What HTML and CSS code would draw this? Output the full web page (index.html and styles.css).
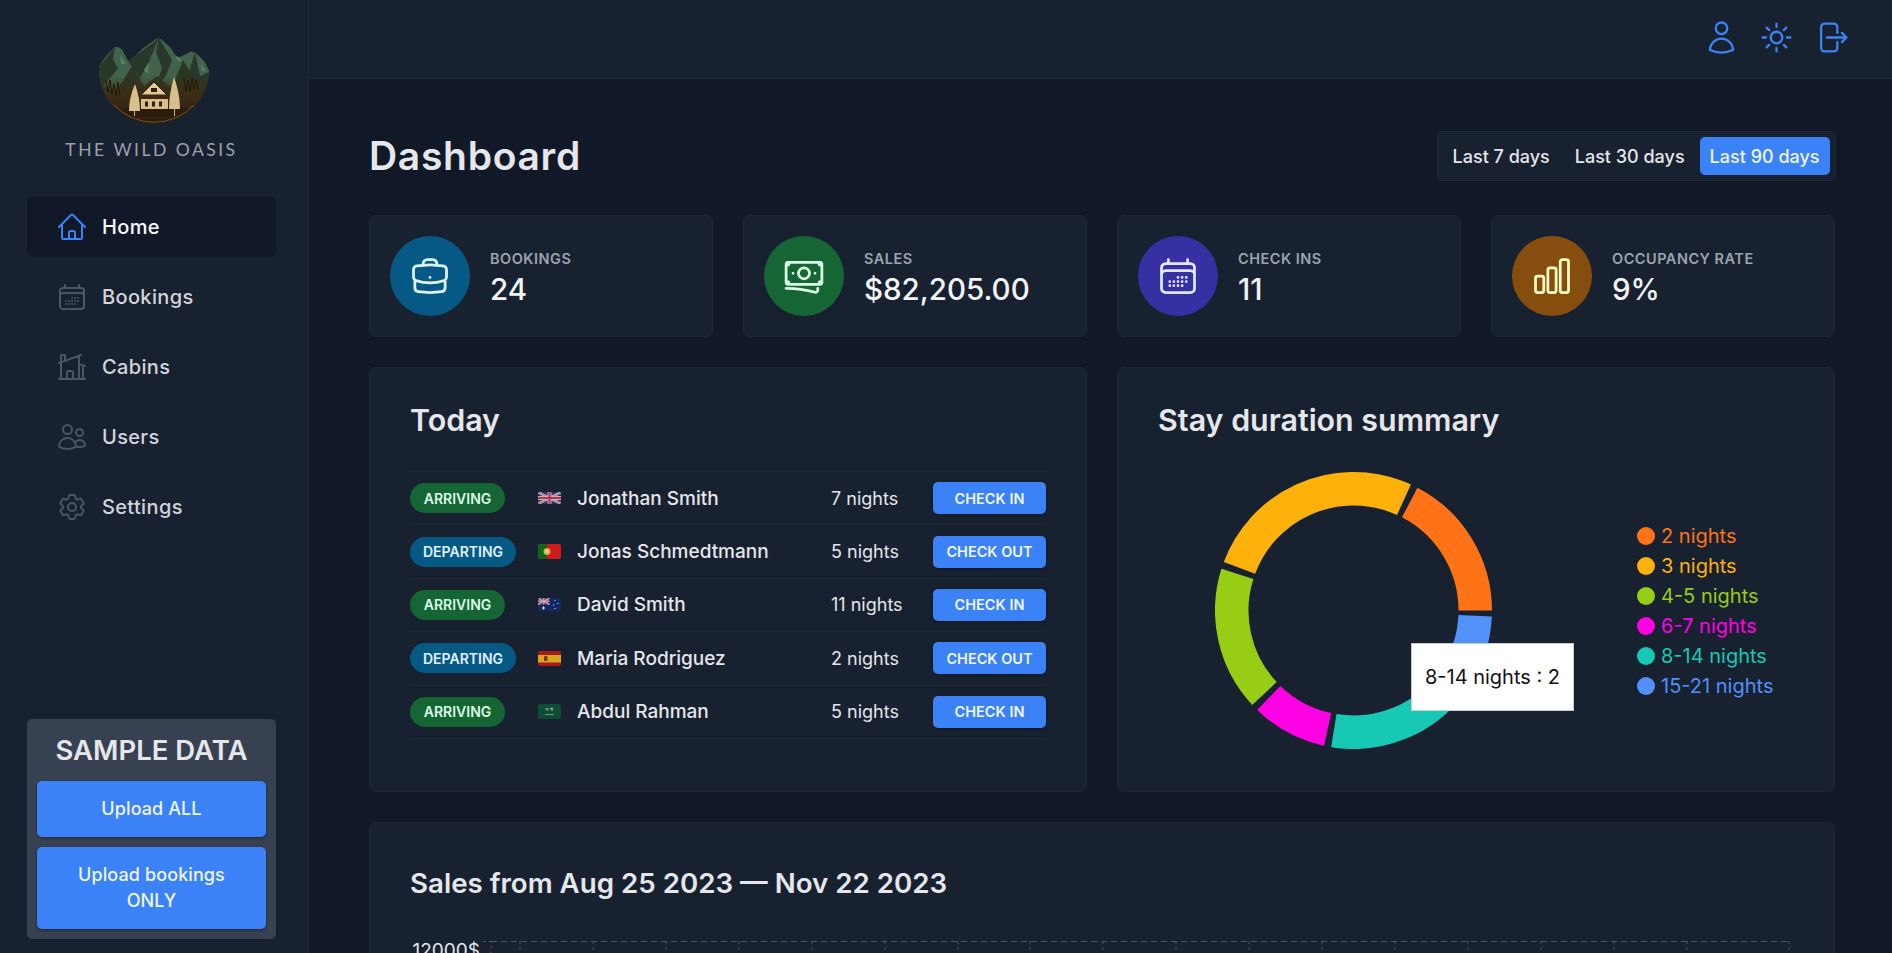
FILE: index.html
```html
<!DOCTYPE html>
<html lang="en">
<head>
  <meta charset="UTF-8"/>
  <title>The Wild Oasis</title>
  <link rel="stylesheet" href="styles.css">
</head>
<body>
<div class="app">
  <aside class="sidebar">
    <div class="brand">
      <svg class="logo" viewBox="0 0 140 100">
        <defs>
          <clipPath id="logoClip"><path d="M17 37 Q21 30 25 25 L33 17 Q37 16 41 21 L46 31 Q52 28 60 19 L74 9 Q77 7 80 10 L88 17 L94 26 Q97 28 100 26 L108 22 Q113 21 116 25 L122 31 L127 40 A55 55 0 0 1 17 37Z"/></clipPath>
          <linearGradient id="logoFade" x1="0" y1="0" x2="0" y2="1">
            <stop offset="0" stop-color="#3f2b12" stop-opacity="0"/>
            <stop offset="0.4" stop-color="#3f2b12" stop-opacity="0.85"/>
            <stop offset="1" stop-color="#2b1c0c"/>
          </linearGradient>
        </defs>
        <g clip-path="url(#logoClip)">
          <rect width="140" height="100" fill="#41634c"/>
          <path d="M17 37 L33 17 L31 30 L36 38 L28 48 L17 60Z M46 31 L58 48 L66 34 L77 8 L64 18Z M77 8 L90 30 L84 46 L72 60 L80 38 L74 22Z M113 22 L107 42 L94 60 L127 66 L127 42 L118 46 L115 32Z" fill="#2a3829"/>
          <path d="M62 40 l5 -8 l-1 12z M92 20 l8 12 l-5 -2z M38 24 l6 10 l-5 0z M120 34 l4 8 l-5 -2z" fill="#5a7d63"/>
          <path d="M34 62 L50 36 L62 56 L75 46 L90 58 L101 30 L113 50 L127 50 L127 80 L17 80 L17 54Z" fill="#2c3723"/>
          <rect x="10" y="46" width="124" height="48" fill="url(#logoFade)"/>
          <path d="M20 78 H125 V100 H20Z" fill="#2b1c0c"/>
          <path d="M24 50 l2 12 l2 -12 l2 14 l2 -10 l2 12 l2 -14 l2 14 M102 48 l2 14 l2 -12 l2 12 l2 -14 l2 12 l2 -10 l2 10" fill="none" stroke="#23180a" stroke-width="1"/>
        </g>
        <path d="M32 75 A55 55 0 0 0 112 75" fill="none" stroke="#7a5528" stroke-width="1"/>
        <path d="M53 54 Q58 68 58 81 H47 Q47 68 53 54Z" fill="#d8bf8e"/>
        <path d="M92 47 Q98 64 98 79 H87 Q87 64 92 47Z" fill="#d8bf8e"/>
        <path d="M52.500 80 V86 M92.500 78 V86" stroke="#cdb183" stroke-width="1"/>
        <path d="M72 52 L85 65 H59Z" fill="#e2c996" stroke="#2b1c0c" stroke-width="1"/>
        <rect x="60" y="65" width="25" height="4" fill="#3a2a14"/>
        <rect x="59" y="69" width="27" height="10" fill="#d9bd8a"/>
        <path d="M63 71.500 h3 v5 h-3z M70 71.500 h3 v5 h-3z M77 71.500 h3 v5 h-3z M69 58 h6 v4 h-6z" fill="#2f2212"/>
        <path d="M52 88 H92" stroke="#3f2b12" stroke-width="1"/>
      </svg>
      <div class="brand-name">THE WILD OASIS</div>
    </div>

    <nav class="nav">
      <a class="nav-link active">
        <svg class="icon" viewBox="0 0 24 24"><path d="M2.25 12l8.954-8.955c.44-.439 1.152-.439 1.591 0L21.75 12M4.5 9.75v10.125c0 .621.504 1.125 1.125 1.125H9.750v-4.875c0-.621.504-1.125 1.125-1.125h2.250c.621 0 1.125.504 1.125 1.125V21h4.125c.621 0 1.125-.504 1.125-1.125V9.750M8.250 21h8.250"/></svg>
        <span>Home</span>
      </a>
      <a class="nav-link">
        <svg class="icon" viewBox="0 0 24 24"><path d="M6.750 3v2.250M17.250 3v2.250M3 18.750V7.500a2.250 2.250 0 012.250-2.250h13.500A2.250 2.250 0 0121 7.500v11.250m-18 0A2.250 2.250 0 005.250 21h13.500A2.250 2.250 0 0021 18.750m-18 0v-7.500A2.250 2.250 0 015.250 9h13.500A2.250 2.250 0 0121 11.250v7.500m-9-6h.008v.008H12v-.008zM12 15h.008v.008H12V15zm0 2.250h.008v.008H12v-.008zM9.750 15h.008v.008H9.750V15zm0 2.250h.008v.008H9.750v-.008zM7.500 15h.008v.008H7.500V15zm0 2.250h.008v.008H7.500v-.008zm6.750-4.500h.008v.008h-.008v-.008zm0 2.250h.008v.008h-.008V15zm0 2.250h.008v.008h-.008v-.008zm2.250-4.500h.008v.008H16.500v-.008zm0 2.250h.008v.008H16.500V15z"/></svg>
        <span>Bookings</span>
      </a>
      <a class="nav-link">
        <svg class="icon" viewBox="0 0 24 24"><path d="M8.250 21v-4.875c0-.621.504-1.125 1.125-1.125h2.250c.621 0 1.125.504 1.125 1.125V21m0 0h4.500V3.545M12.750 21h7.500V10.750M2.250 21h1.500m18 0h-18M2.250 9l4.500-1.636M18.750 3l-1.500.545m0 6.205l3 1m1.500.5l-1.500-.5M6.750 7.364V3h-3v18m3-13.636l10.500-3.819"/></svg>
        <span>Cabins</span>
      </a>
      <a class="nav-link">
        <svg class="icon" viewBox="0 0 24 24"><path d="M15 19.128a9.380 9.380 0 002.625.372 9.337 9.337 0 004.121-.952 4.125 4.125 0 00-7.533-2.493M15 19.128v-.003c0-1.113-.285-2.160-.786-3.070M15 19.128v.106A12.318 12.318 0 018.624 21c-2.331 0-4.512-.645-6.374-1.766l-.001-.109a6.375 6.375 0 0111.964-3.070M12 6.375a3.375 3.375 0 11-6.750 0 3.375 3.375 0 016.750 0zm8.250 2.250a2.625 2.625 0 11-5.250 0 2.625 2.625 0 015.250 0z"/></svg>
        <span>Users</span>
      </a>
      <a class="nav-link">
        <svg class="icon" viewBox="0 0 24 24"><path d="M9.594 3.940c.09-.542.56-.94 1.110-.94h2.593c.55 0 1.020.398 1.110.94l.213 1.281c.063.374.313.686.645.870.074.04.147.083.22.127.324.196.72.257 1.075.124l1.217-.456a1.125 1.125 0 011.370.49l1.296 2.247a1.125 1.125 0 01-.26 1.431l-1.003.827c-.293.24-.438.613-.431.992a6.759 6.759 0 010 .255c-.007.378.138.75.43.99l1.005.828c.424.35.534.954.26 1.430l-1.298 2.247a1.125 1.125 0 01-1.369.491l-1.217-.456c-.355-.133-.75-.072-1.076.124a6.570 6.570 0 01-.22.128c-.331.183-.581.495-.644.869l-.213 1.280c-.09.543-.56.941-1.110.941h-2.594c-.55 0-1.020-.398-1.110-.94l-.213-1.281c-.062-.374-.312-.686-.644-.87a6.520 6.520 0 01-.22-.127c-.325-.196-.72-.257-1.076-.124l-1.217.456a1.125 1.125 0 01-1.369-.49l-1.297-2.247a1.125 1.125 0 01.26-1.431l1.004-.827c.292-.24.437-.613.43-.992a6.932 6.932 0 010-.255c.007-.378-.138-.75-.43-.99l-1.004-.828a1.125 1.125 0 01-.26-1.430l1.297-2.247a1.125 1.125 0 011.370-.491l1.216.456c.356.133.751.072 1.076-.124.072-.044.146-.087.22-.128.332-.183.582-.495.644-.869l.214-1.281z"/><path d="M15 12a3 3 0 11-6 0 3 3 0 016 0z"/></svg>
        <span>Settings</span>
      </a>
    </nav>

    <div class="sample">
      <h3>SAMPLE DATA</h3>
      <button class="btn upload-btn">Upload ALL</button>
      <button class="btn upload-btn">Upload bookings ONLY</button>
    </div>
  </aside>

  <header class="topbar">
    <svg class="top-icon" viewBox="0 0 24 24"><path d="M15.750 6a3.750 3.750 0 11-7.500 0 3.750 3.750 0 017.500 0zM4.501 20.118a7.500 7.500 0 0114.998 0A17.933 17.933 0 0112 21.750c-2.676 0-5.216-.584-7.499-1.632z"/></svg>
    <svg class="top-icon" viewBox="0 0 24 24"><path d="M12 3v2.250m6.364.386l-1.591 1.591M21 12h-2.250m-.386 6.364l-1.591-1.591M12 18.750V21m-4.773-4.227l-1.591 1.591M5.250 12H3m4.227-4.773L5.636 5.636M15.750 12a3.750 3.750 0 11-7.500 0 3.750 3.750 0 017.500 0z"/></svg>
    <svg class="top-icon" viewBox="0 0 24 24"><path d="M15.750 9V5.250A2.250 2.250 0 0013.500 3h-6a2.250 2.250 0 00-2.250 2.250v13.500A2.250 2.250 0 007.500 21h6a2.250 2.250 0 002.250-2.250V15m3 0l3-3m0 0l-3-3m3 3H9"/></svg>
  </header>

  <main class="main">
    <div class="page-head">
      <h1>Dashboard</h1>
      <div class="filter">
        <button class="filter-btn">Last 7 days</button>
        <button class="filter-btn">Last 30 days</button>
        <button class="filter-btn active">Last 90 days</button>
      </div>
    </div>

    <div class="dash">
      <div class="stat">
        <div class="stat-icon blue">
          <svg viewBox="0 0 24 24"><path d="M20.250 14.150v4.250c0 1.094-.787 2.036-1.872 2.180-2.087.277-4.216.42-6.378.42s-4.291-.143-6.378-.42c-1.085-.144-1.872-1.086-1.872-2.180v-4.250m16.500 0a2.180 2.180 0 00.75-1.661V8.706c0-1.081-.768-2.015-1.837-2.175a48.114 48.114 0 00-3.413-.387m4.500 8.006c-.194.165-.42.295-.673.38A23.978 23.978 0 0112 15.750c-2.648 0-5.195-.429-7.577-1.220a2.016 2.016 0 01-.673-.38m0 0A2.180 2.180 0 013 12.489V8.706c0-1.081.768-2.015 1.837-2.175a48.111 48.111 0 013.413-.387m7.500 0V5.250A2.250 2.250 0 0013.500 3h-3a2.250 2.250 0 00-2.250 2.250v.894m7.500 0a48.667 48.667 0 00-7.500 0M12 12.750h.008v.008H12v-.008z"/></svg>
        </div>
        <div class="stat-text"><div class="stat-label">BOOKINGS</div><div class="stat-value">24</div></div>
      </div>
      <div class="stat">
        <div class="stat-icon green">
          <svg viewBox="0 0 24 24"><path d="M2.250 18.750a60.070 60.070 0 0115.797 2.101c.727.198 1.453-.342 1.453-1.096V18.750M3.750 4.500v.75A.75.75 0 013 6h-.75m0 0v-.375c0-.621.504-1.125 1.125-1.125H20.250M2.250 6v9m18-10.500v.75c0 .414.336.75.75.75h.75m-1.500-1.500h.375c.621 0 1.125.504 1.125 1.125v9.750c0 .621-.504 1.125-1.125 1.125h-.375m1.500-1.500H21a.75.75 0 00-.75.75v.75m0 0H3.750m0 0h-.375a1.125 1.125 0 01-1.125-1.125V15m1.500 1.500v-.75A.75.75 0 003 15h-.75M15 10.500a3 3 0 11-6 0 3 3 0 016 0zm3 0h.008v.008H18V10.500zm-12 0h.008v.008H6V10.500z"/></svg>
        </div>
        <div class="stat-text"><div class="stat-label">SALES</div><div class="stat-value">$82,205.00</div></div>
      </div>
      <div class="stat">
        <div class="stat-icon indigo">
          <svg viewBox="0 0 24 24"><path d="M6.750 3v2.250M17.250 3v2.250M3 18.750V7.500a2.250 2.250 0 012.250-2.250h13.500A2.250 2.250 0 0121 7.500v11.250m-18 0A2.250 2.250 0 005.250 21h13.500A2.250 2.250 0 0021 18.750m-18 0v-7.500A2.250 2.250 0 015.250 9h13.500A2.250 2.250 0 0121 11.250v7.500m-9-6h.008v.008H12v-.008zM12 15h.008v.008H12V15zm0 2.250h.008v.008H12v-.008zM9.750 15h.008v.008H9.750V15zm0 2.250h.008v.008H9.750v-.008zM7.500 15h.008v.008H7.500V15zm0 2.250h.008v.008H7.500v-.008zm6.750-4.500h.008v.008h-.008v-.008zm0 2.250h.008v.008h-.008V15zm0 2.250h.008v.008h-.008v-.008zm2.250-4.500h.008v.008H16.500v-.008zm0 2.250h.008v.008H16.500V15z"/></svg>
        </div>
        <div class="stat-text"><div class="stat-label">CHECK INS</div><div class="stat-value">11</div></div>
      </div>
      <div class="stat">
        <div class="stat-icon amber">
          <svg viewBox="0 0 24 24"><path d="M3 13.125C3 12.504 3.504 12 4.125 12h2.250c.621 0 1.125.504 1.125 1.125v6.750C7.500 20.496 6.996 21 6.375 21h-2.250A1.125 1.125 0 013 19.875v-6.750zM9.750 8.625c0-.621.504-1.125 1.125-1.125h2.250c.621 0 1.125.504 1.125 1.125v11.250c0 .621-.504 1.125-1.125 1.125h-2.250a1.125 1.125 0 01-1.125-1.125V8.625zM16.500 4.125c0-.621.504-1.125 1.125-1.125h2.250C20.496 3 21 3.504 21 4.125v15.750c0 .621-.504 1.125-1.125 1.125h-2.250a1.125 1.125 0 01-1.125-1.125V4.125z"/></svg>
        </div>
        <div class="stat-text"><div class="stat-label">OCCUPANCY RATE</div><div class="stat-value">9%</div></div>
      </div>

      <section class="panel today">
        <h2>Today</h2>
        <ul class="activity">
          <li class="activity-row">
            <span class="tag tag-green">ARRIVING</span>
            <svg class="flag flag-wide" viewBox="0 0 60 30"><rect width="60" height="30" fill="#2a3f7c"/><path d="M0 0L60 30M60 0L0 30" stroke="#e8e4ea" stroke-width="6"/><path d="M0 0L60 30M60 0L0 30" stroke="#c8354f" stroke-width="2"/><path d="M30 0V30M0 15H60" stroke="#e8e4ea" stroke-width="10"/><path d="M30 0V30M0 15H60" stroke="#c8354f" stroke-width="6"/></svg>
            <span class="guest">Jonathan Smith</span>
            <span class="nights">7 nights</span>
            <button class="btn check-btn">CHECK IN</button>
          </li>
          <li class="activity-row">
            <span class="tag tag-blue">DEPARTING</span>
            <svg class="flag" viewBox="0 0 23 15"><rect width="23" height="15" fill="#e01b1b"/><rect width="9" height="15" fill="#0f6a1f"/><circle cx="9" cy="7.500" r="3.500" fill="#e8c02a"/><circle cx="9" cy="7.500" r="1.800" fill="#d8d8d8"/></svg>
            <span class="guest">Jonas Schmedtmann</span>
            <span class="nights">5 nights</span>
            <button class="btn check-btn">CHECK OUT</button>
          </li>
          <li class="activity-row">
            <span class="tag tag-green">ARRIVING</span>
            <svg class="flag flag-mid" viewBox="0 0 23 13"><rect width="23" height="13" fill="#14296b"/><rect width="11.500" height="6.500" fill="#2a3f7c"/><path d="M0 0L11.500 6.500M11.500 0L0 6.500M5.750 0V6.500M0 3.250H11.500" stroke="#e0a0b0" stroke-width="1.600"/><path d="M5.500 8.500v3M4 10h3" stroke="#fff" stroke-width="1"/><path d="M17 2v1M20 5v1M15.500 6.500v1M17 10v1" stroke="#fff" stroke-width="1"/></svg>
            <span class="guest">David Smith</span>
            <span class="nights">11 nights</span>
            <button class="btn check-btn">CHECK IN</button>
          </li>
          <li class="activity-row">
            <span class="tag tag-blue">DEPARTING</span>
            <svg class="flag" viewBox="0 0 23 15"><rect width="23" height="15" fill="#b5191f"/><rect y="4" width="23" height="7.500" fill="#eab318"/><rect x="6" y="5" width="3.500" height="5" rx="1" fill="#7a3b1a"/></svg>
            <span class="guest">Maria Rodriguez</span>
            <span class="nights">2 nights</span>
            <button class="btn check-btn">CHECK OUT</button>
          </li>
          <li class="activity-row">
            <span class="tag tag-green">ARRIVING</span>
            <svg class="flag" viewBox="0 0 23 15"><rect width="23" height="15" fill="#0e5136"/><path d="M7 5h2M10 4v2.500M12 4.500h3M13 6h2" stroke="#b6cdbd" stroke-width="1"/><path d="M7 10.500h9" stroke="#9db8a6" stroke-width="0.800"/></svg>
            <span class="guest">Abdul Rahman</span>
            <span class="nights">5 nights</span>
            <button class="btn check-btn">CHECK IN</button>
          </li>
        </ul>
      </section>

      <section class="panel summary">
        <h2>Stay duration summary</h2>
        <div class="summary-body">
          <div class="donut">
            <svg viewBox="0 0 277 277">
              <circle class="seg" cx="138.500" cy="138.500" r="121.750" stroke="#ff7316" pathLength="360" stroke-dasharray="62.500 297.500" transform="rotate(-62.500 138.500 138.500)"/>
              <circle class="seg" cx="138.500" cy="138.500" r="121.750" stroke="#fdb20b" pathLength="360" stroke-dasharray="94 266" transform="rotate(200.500 138.500 138.500)"/>
              <circle class="seg" cx="138.500" cy="138.500" r="121.750" stroke="#97cd14" pathLength="360" stroke-dasharray="60.500 299.500" transform="rotate(137 138.500 138.500)"/>
              <circle class="seg" cx="138.500" cy="138.500" r="121.750" stroke="#ff00e5" pathLength="360" stroke-dasharray="31.800 328.200" transform="rotate(102.300 138.500 138.500)"/>
              <circle class="seg" cx="138.500" cy="138.500" r="121.750" stroke="#17c8b5" pathLength="360" stroke-dasharray="62.800 297.200" transform="rotate(36.500 138.500 138.500)"/>
              <circle class="seg" cx="138.500" cy="138.500" r="121.750" stroke="#5290fa" pathLength="360" stroke-dasharray="31 329" transform="rotate(2.500 138.500 138.500)"/>
            </svg>
            <div class="chart-tip">8-14 nights : 2</div>
          </div>
          <ul class="legend">
            <li class="c-orange"><i></i>2 nights</li>
            <li class="c-yellow"><i></i>3 nights</li>
            <li class="c-lime"><i></i>4-5 nights</li>
            <li class="c-pink"><i></i>6-7 nights</li>
            <li class="c-teal"><i></i>8-14 nights</li>
            <li class="c-sky"><i></i>15-21 nights</li>
          </ul>
        </div>
      </section>

      <section class="panel sales">
        <h2>Sales from Aug 25 2023 &mdash; Nov 22 2023</h2>
        <svg class="sales-chart" viewBox="0 0 1385 60">
          <text class="axis-label" x="70" y="16" text-anchor="end">12000$</text>
          <path class="grid-line" d="M81 0.500H1379"/>
          <path class="axis-line" d="M73 0.500H81V60M110 0V60M183 0V60M256 0V60M329 0V60M402 0V60M475 0V60M548 0V60M620 0V60M693 0V60M766 0V60M839 0V60M912 0V60M985 0V60M1058 0V60M1131 0V60M1204 0V60M1277 0V60M1379 0V60"/>
        </svg>
      </section>
    </div>
  </main>
</div>
</body>
</html>
```

FILE: styles.css
```css
* { box-sizing:border-box; }
html,body { margin:0; height:100%; overflow:hidden; }
body { font-family:'Inter','Noto Sans',sans-serif; background:#111827; color:#e5e7eb; }
ul { list-style:none; margin:0; padding:0; }
h1,h2,h3 { margin:0; }
button { font-family:inherit; cursor:pointer; border:none; }

.app { display:grid; grid-template-columns:309px 1fr; grid-template-rows:79px 1fr; height:953px; }

/* sidebar */
.sidebar { grid-row:1 / 3; display:flex; flex-direction:column; padding:30px 32px 14px 27px; background:#18212f; border-right:1px solid #1f2937; }
.brand { display:flex; flex-direction:column; align-items:center; height:167px; }
.logo { width:140px; height:100px; flex:none; }
.brand-name { margin-top:9px; font-family:'Lato',sans-serif; font-size:17.500px; letter-spacing:2.500px; color:#9ca3af; white-space:nowrap; }
.nav { display:flex; flex-direction:column; gap:10px; }
.nav-link { display:flex; align-items:center; gap:14px; height:60px; padding-left:29px; border-radius:5px; font-size:20px; font-weight:500; letter-spacing:.35px; color:#d1d5db; }
.nav-link .icon { width:32px; height:32px; fill:none; stroke:#4b5563; stroke-width:1.500; stroke-linecap:round; stroke-linejoin:round; }
.nav-link.active { background:#111827; color:#f9fafb; }
.nav-link.active .icon { stroke:#3b82f6; }
.sample { margin-top:auto; display:flex; flex-direction:column; gap:10px; padding:10px; background:#374151; border-radius:5px; }
.sample h3 { font-size:27.500px; font-weight:600; line-height:42px; text-align:center; }
.btn { background:#3b82f6; color:#eff6ff; border-radius:5px; box-shadow:0 1px 3px rgba(0,0,0,.4); }
.upload-btn { padding:15px 32px; font-size:18px; font-weight:500; line-height:26px; letter-spacing:.1px; }

/* header */
.topbar { display:flex; justify-content:flex-end; align-items:flex-start; gap:18px; padding:19px 42px 0 0; background:#18212f; border-bottom:1px solid #1f2937; }
.top-icon { width:37px; height:37px; fill:none; stroke:#3b82f6; stroke-width:1.500; stroke-linecap:round; stroke-linejoin:round; }

/* main */
.main { padding:52px 56.500px 0 60px; overflow:hidden; }
.page-head { display:flex; justify-content:space-between; align-items:center; margin-bottom:34px; }
h1 { font-size:39px; font-weight:600; line-height:48px; letter-spacing:.7px; color:#e5e7eb; }
.filter { display:flex; gap:5px; padding:5px; background:#18212f; border:1px solid #1f2937; border-radius:5px; }
.filter-btn { height:38px; padding:0 10px; background:none; color:#e5e7eb; font-size:18px; font-weight:500; border-radius:5px; white-space:nowrap; }
.filter-btn.active { background:#3b82f6; color:#eff6ff; }

.dash { display:grid; grid-template-columns:repeat(4,344px); grid-template-rows:122px 425px auto; gap:30px; }
.stat { display:flex; align-items:center; gap:20px; padding:0 20px; background:#18212f; border:1px solid #1f2937; border-radius:7px; }
.stat-icon { flex:none; display:flex; align-items:center; justify-content:center; width:80px; height:80px; border-radius:50%; }
.stat-icon svg { width:44px; height:44px; fill:none; stroke:inherit; stroke-width:1.500; stroke-linecap:round; stroke-linejoin:round; }
.blue { background:#075985; stroke:#e0f2fe; }
.green { background:#166534; stroke:#dcfce7; }
.indigo { background:#3730a3; stroke:#e0e7ff; }
.amber { background:#854d0e; stroke:#fef9c3; }
.stat-text { padding-top:5px; }
.stat-label { font-size:14.500px; font-weight:600; line-height:20px; color:#9ca3af; letter-spacing:.5px; }
.stat-value { font-size:29.500px; font-weight:500; line-height:40px; color:#f3f4f6; }

.panel { padding:32px 40px; background:#18212f; border:1px solid #1f2937; border-radius:7px; }
.panel h2 { font-size:30.400px; font-weight:600; line-height:40px; color:#e5e7eb; }
.today, .summary { grid-column:span 2; }
.activity { margin-top:31px; border-top:1px solid #1f2937; }
.activity-row { display:grid; grid-template-columns:112px 23px 1fr 86px 113px; column-gap:16px; align-items:center; height:53.400px; border-bottom:1px solid #1f2937; font-size:19px; font-weight:500; }
.tag { justify-self:start; display:flex; align-items:center; justify-content:center; height:30px; padding:0 15px; border-radius:100px; font-size:14px; font-weight:600; white-space:nowrap; }
.tag-green { width:95px; background:#166534; color:#dcfce7; }
.tag-blue { width:106px; background:#075985; color:#e0f2fe; }
.flag { width:23px; height:15px; border-radius:2px; opacity:.92; }
.flag-wide { height:12px; }
.flag-mid { height:13px; }
.guest { color:#e5e7eb; white-space:nowrap; }
.nights { color:#e5e7eb; font-size:18px; font-weight:400; white-space:nowrap; }
.check-btn { height:32px; font-size:14.500px; font-weight:600; white-space:nowrap; }

.summary-body { display:flex; align-items:center; margin:32px 0 0 57px; gap:145px; }
.donut { position:relative; flex:none; width:277px; height:277px; }
.donut svg { display:block; width:277px; height:277px; }
.seg { fill:none; stroke-width:33.500; }
.chart-tip { position:absolute; left:196px; top:171px; width:163px; height:68px; display:flex; align-items:center; justify-content:center; background:#fff; border:1px solid #ccc; color:#111; font-size:20px; white-space:nowrap; }
.legend { display:flex; flex-direction:column; font-size:20px; line-height:30px; }
.legend li { display:flex; align-items:center; gap:6px; white-space:nowrap; }
.legend i { width:18px; height:18px; border-radius:50%; background:currentColor; }
.c-orange { color:#ff7316; }
.c-yellow { color:#fdb20b; }
.c-lime { color:#97cd14; }
.c-pink { color:#ff00e5; }
.c-teal { color:#17c8b5; }
.c-sky { color:#5290fa; }

.sales { grid-column:1 / -1; padding-top:40px; height:420px; }
.sales.panel h2 { font-size:27.700px; }
.sales-chart { display:block; width:1385px; height:60px; margin:38px 0 0 0; overflow:visible; }
.axis-label { font-size:19px; fill:#e5e7eb; }
.grid-line { stroke:#4b5563; stroke-width:1; stroke-dasharray:6 4; fill:none; }
.axis-line { stroke:#4b5563; stroke-width:1; stroke-dasharray:3 3; fill:none; }
```
